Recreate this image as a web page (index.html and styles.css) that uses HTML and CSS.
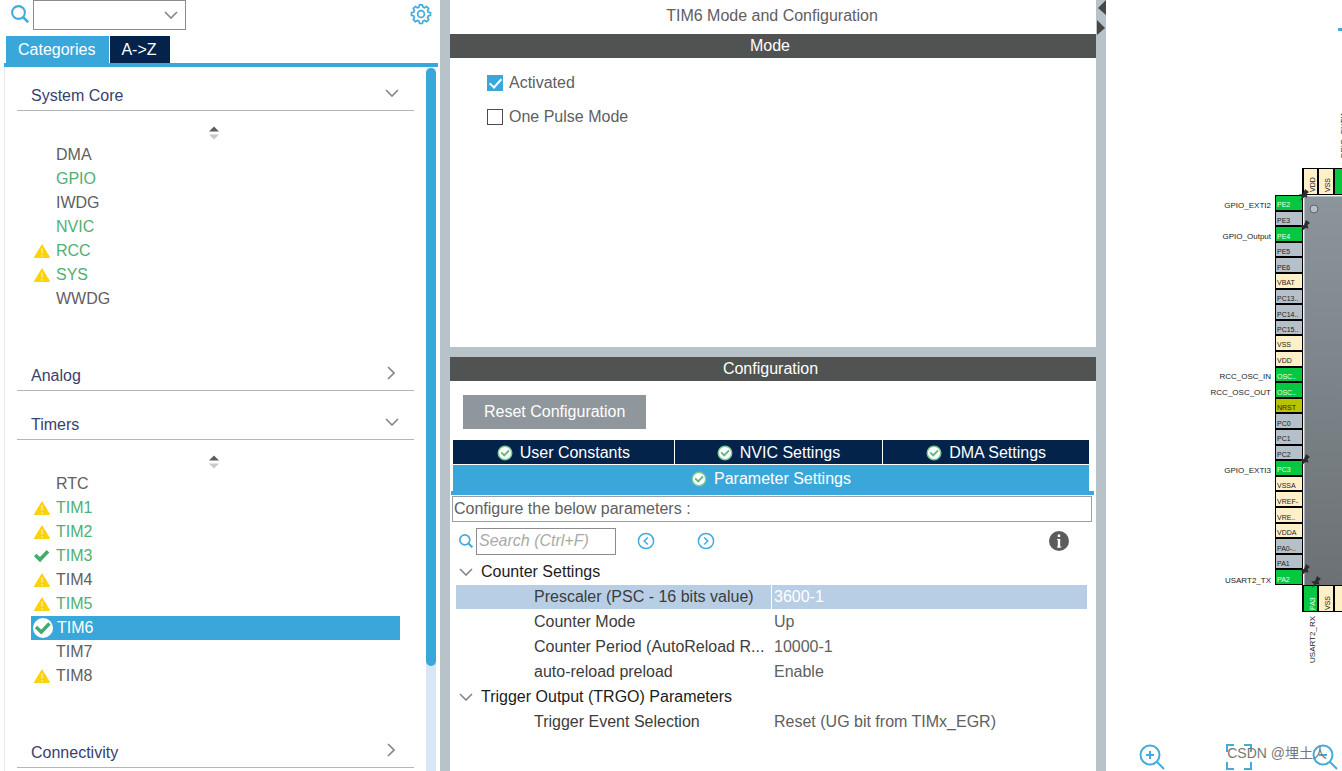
FILE: index.html
```html
<!DOCTYPE html>
<html lang="en">
<head>
<meta charset="utf-8">
<title>TIM6 Mode and Configuration</title>
<link rel="stylesheet" href="styles.css">
</head>
<body>
<svg class="defs" aria-hidden="true">
  <symbol id="warn" viewBox="0 0 16 14"><path d="M8 0.8 L15.4 13 Q15.6 13.6 15 13.6 H1 Q0.4 13.6 0.6 13 Z" fill="#fbd20c" stroke="#fbd20c" stroke-linejoin="round"/><path d="M8 4.5v5M8 11v1.4" stroke="#fff6c4" stroke-width="1.2"/></symbol>
  <symbol id="tick" viewBox="0 0 16 14"><path d="M1.2 6 L6 10.6 L14 2.2" fill="none" stroke="#43ab6c" stroke-width="3.6"/></symbol>
  <symbol id="tick-disc" viewBox="0 0 20 20"><circle cx="10" cy="10" r="10" fill="#fff"/><path d="M3 9 L8.3 14 L16.5 5.5" fill="none" stroke="#43ab6c" stroke-width="3.4"/></symbol>
  <symbol id="ok" viewBox="0 0 16 16"><circle cx="8" cy="8" r="6.8" fill="#fff" stroke="#7cc893" stroke-width="1.4"/><path d="M4.2 7.4 L7.2 10.4 L12 5.4" fill="none" stroke="#5cb87c" stroke-width="1.8"/></symbol>
  <symbol id="down" viewBox="0 0 14 8"><path d="M1 1 L7 7 L13 1" fill="none" stroke="#858585" stroke-width="1.6"/></symbol>
  <symbol id="right" viewBox="0 0 8 14"><path d="M1 1 L7 7 L1 13" fill="none" stroke="#858585" stroke-width="1.6"/></symbol>
  <symbol id="search" viewBox="0 0 18 18"><circle cx="7.5" cy="7.5" r="6.4" fill="none" stroke="#44abdd" stroke-width="2.1"/><path d="M12 12 L17.2 17.2" stroke="#44abdd" stroke-width="2.6"/></symbol>
  <symbol id="sort" viewBox="0 0 10 14"><path d="M0 5.5 L5 0.5 L10 5.5Z" fill="#5d5d5d"/><path d="M0 8.5 L5 13.5 L10 8.5Z" fill="#c9c9c9"/></symbol>
  <symbol id="pushpin" viewBox="0 0 10 12"><path d="M5 2.5 L6 0 L10 3 L7.5 5 L8.5 8.5 L5.5 8 L1 12 L3 8 L0 5.5 L4 5Z" fill="#2b2d2f"/></symbol>
</svg>
<div class="app">
  <aside class="sidebar">
    <div class="finder">
      <label for="ip-search"><svg class="i18"><use href="#search"/></svg></label>
      <div class="combo"><select id="ip-search" aria-label="Find peripheral"><option></option></select><svg class="chev"><use href="#down"/></svg></div>
      <button class="gear" aria-label="Settings"><svg viewBox="0 0 22 22"><path d="M9.6 1h2.8l.6 2.3 1.6.6 2-1.2 2.1 2-1.1 2.1.6 1.5 2.3.6v2.6l-2.3.7-.6 1.5 1.1 2.1-2.1 2-2-1.1-1.6.6-.6 2.4H9.6L9 17.3l-1.6-.6-2 1.1-2.1-2 1.1-2.1-.6-1.5-2.3-.7V8.9l2.3-.6.6-1.5-1.1-2.1 2.1-2 2 1.2L9 3.3Z" transform="translate(0 .8)" fill="none" stroke="#44abdd" stroke-width="1.7"/><circle cx="11" cy="11" r="3.4" fill="none" stroke="#44abdd" stroke-width="1.7"/></svg></button>
    </div>
    <div class="side-tabs"><button class="on">Categories</button><button>A-&gt;Z</button></div>
    <div class="side-body">
      <nav class="tree">
        <button class="cat">System Core<svg class="chev"><use href="#down"/></svg></button>
        <div class="sort"><svg><use href="#sort"/></svg></div>
        <ul>
          <li>DMA</li>
          <li class="g">GPIO</li>
          <li>IWDG</li>
          <li class="g">NVIC</li>
          <li class="g"><svg><use href="#warn"/></svg>RCC</li>
          <li class="g"><svg><use href="#warn"/></svg>SYS</li>
          <li>WWDG</li>
        </ul>
        <button class="cat">Analog<svg class="chev-r"><use href="#right"/></svg></button>
        <button class="cat">Timers<svg class="chev"><use href="#down"/></svg></button>
        <div class="sort"><svg><use href="#sort"/></svg></div>
        <ul>
          <li>RTC</li>
          <li class="g"><svg><use href="#warn"/></svg>TIM1</li>
          <li class="g"><svg><use href="#warn"/></svg>TIM2</li>
          <li class="g"><svg><use href="#tick"/></svg>TIM3</li>
          <li><svg><use href="#warn"/></svg>TIM4</li>
          <li class="g"><svg><use href="#warn"/></svg>TIM5</li>
          <li class="sel"><svg class="disc"><use href="#tick-disc"/></svg>TIM6</li>
          <li>TIM7</li>
          <li><svg><use href="#warn"/></svg>TIM8</li>
        </ul>
        <button class="cat">Connectivity<svg class="chev-r"><use href="#right"/></svg></button>
      </nav>
      <div class="scroll"><div class="thumb"></div></div>
    </div>
  </aside>
  <div class="splitter"></div>
  <main class="center">
    <h1>TIM6 Mode and Configuration</h1>
    <section class="mode">
      <h2>Mode</h2>
      <label class="check"><input type="checkbox" checked>Activated</label>
      <label class="check"><input type="checkbox">One Pulse Mode</label>
    </section>
    <section class="config">
      <h2>Configuration</h2>
      <button class="reset">Reset Configuration</button>
      <div class="tabs">
        <button><svg><use href="#ok"/></svg>User Constants</button>
        <button><svg><use href="#ok"/></svg>NVIC Settings</button>
        <button><svg><use href="#ok"/></svg>DMA Settings</button>
      </div>
      <div class="active-tab"><button><svg><use href="#ok"/></svg>Parameter Settings</button></div>
      <div class="params">
        <p>Configure the below parameters :</p>
        <div class="tools">
          <label for="q"><svg class="i14"><use href="#search"/></svg></label>
          <input id="q" type="text" placeholder="Search (Ctrl+F)">
          <button aria-label="Previous"><svg viewBox="0 0 18 18"><circle cx="9" cy="9" r="7.6"/><path d="M10.8 5.5 L7.2 9 L10.8 12.5"/></svg></button>
          <button aria-label="Next"><svg viewBox="0 0 18 18"><circle cx="9" cy="9" r="7.6"/><path d="M7.2 5.5 L10.8 9 L7.2 12.5"/></svg></button>
          <button class="info" aria-label="Information"><svg viewBox="0 0 20 20"><circle cx="10" cy="10" r="10" fill="#5c5c5c"/><path d="M10 3.5v2.6M10 8v8.5" stroke="#fff" stroke-width="2.4"/><path d="M8 8.4h2M8 16h4.4" stroke="#fff" stroke-width="1"/></svg></button>
        </div>
        <table>
          <colgroup><col class="name-col"><col></colgroup>
          <tbody>
            <tr><th colspan="2"><svg class="chev"><use href="#down"/></svg>Counter Settings</th></tr>
            <tr class="hl"><td>Prescaler (PSC - 16 bits value)</td><td>3600-1</td></tr>
            <tr><td>Counter Mode</td><td>Up</td></tr>
            <tr><td>Counter Period (AutoReload R...</td><td>10000-1</td></tr>
            <tr><td>auto-reload preload</td><td>Enable</td></tr>
            <tr><th colspan="2"><svg class="chev"><use href="#down"/></svg>Trigger Output (TRGO) Parameters</th></tr>
            <tr><td>Trigger Event Selection</td><td>Reset (UG bit from TIMx_EGR)</td></tr>
          </tbody>
        </table>
      </div>
    </section>
  </main>
  <div class="splitter"><svg viewBox="0 0 10 36"><path d="M10 0v15L2 8Z M1 20v15l8-7Z" fill="#474747"/></svg></div>
  <section class="pinout" aria-label="Pinout view">
    <svg class="chip" viewBox="0 0 236 700">
      <defs><linearGradient id="body" x1="0" y1="0" x2="0" y2="1"><stop offset="0" stop-color="#8d959c"/><stop offset="1" stop-color="#6b7174"/></linearGradient></defs>
      <rect x="232" y="28" width="4" height="3" fill="#44abdd"/>
      <rect x="198" y="196" width="38" height="389" fill="url(#body)"/>
      <path d="M198 585V196H236" fill="none" stroke="#e4e6e8"/>
      <circle cx="208" cy="209" r="4" fill="#b7c0c8" stroke="#5d6368"/>
      <path d="M169 195h28v390h-28z M196 168h40v27h-40z M196 585h40v27h-40z" fill="#000"/>
      <g class="free">
        <path d="M170 212h26v13h-26z M170 243h26v13h-26z M170 258h26v14h-26z M170 290h26v13h-26z M170 305h26v14h-26z M170 321h26v13h-26z M170 414h26v14h-26z M170 430h26v14h-26z M170 446h26v13h-26z M170 539h26v14h-26z M170 555h26v13h-26z"/>
      </g>
      <g class="power">
        <path d="M170 274h26v14h-26z M170 336h26v14h-26z M170 352h26v14h-26z M170 477h26v13h-26z M170 492h26v14h-26z M170 508h26v14h-26z M170 524h26v13h-26z M198 169h13v25h-13z M213 169h14v25h-14z M213 586h14v25h-14z M229 586h7v25h-7z"/>
      </g>
      <g class="used">
        <path d="M170 196h26v14h-26z M170 227h26v14h-26z M170 368h26v13h-26z M170 383h26v14h-26z M170 461h26v14h-26z M170 570h26v14h-26z M229 169h7v25h-7z M198 586h13v25h-13z"/>
      </g>
      <path d="M170 399h26v13h-26z" fill="#b8c400"/>
      <g class="pin">
        <text class="w" x="171" y="207">PE2</text><text x="171" y="223">PE3</text><text class="w" x="171" y="239">PE4</text>
        <text x="171" y="254">PE5</text><text x="171" y="270">PE6</text><text x="171" y="285">VBAT</text>
        <text x="171" y="301">PC13..</text><text x="171" y="317">PC14..</text><text x="171" y="332">PC15..</text>
        <text x="171" y="347">VSS</text><text x="171" y="363">VDD</text><text class="w" x="171" y="379">OSC..</text>
        <text class="w" x="171" y="395">OSC..</text><text x="171" y="410">NRST</text><text x="171" y="426">PC0</text>
        <text x="171" y="441">PC1</text><text x="171" y="457">PC2</text><text class="w" x="171" y="472">PC3</text>
        <text x="171" y="488">VSSA</text><text x="171" y="504">VREF-</text><text x="171" y="520">VRE..</text>
        <text x="171" y="535">VDDA</text><text x="171" y="551">PA0-..</text><text x="171" y="566">PA1</text>
        <text class="w" x="171" y="582">PA2</text>
        <text transform="translate(209 192) rotate(-90)">VDD</text><text transform="translate(224 192) rotate(-90)">VSS</text>
        <text class="w" transform="translate(209 610) rotate(-90)">PA3</text><text transform="translate(224 610) rotate(-90)">VSS</text>
      </g>
      <g class="signal">
        <text x="165" y="208">GPIO_EXTI2</text><text x="165" y="239">GPIO_Output</text><text x="165" y="379">RCC_OSC_IN</text>
        <text x="165" y="395">RCC_OSC_OUT</text><text x="165" y="473">GPIO_EXTI3</text><text x="165" y="583">USART2_TX</text>
        <text transform="translate(209 616) rotate(-90)">USART2_RX</text><text transform="translate(240 112) rotate(-90)">GPIO_EXTI1</text>
      </g>
      <use href="#pushpin" x="193" y="189" width="10" height="12"/><use href="#pushpin" x="194" y="220" width="10" height="12"/>
      <use href="#pushpin" x="194" y="454" width="10" height="12"/><use href="#pushpin" x="194" y="564" width="10" height="12"/>
      <use href="#pushpin" x="205" y="576" width="10" height="12"/>
    </svg>
    <div class="zoombar">
      <button aria-label="Zoom in"><svg viewBox="0 0 26 26"><circle cx="11" cy="11" r="9.5"/><path d="M18 18l7 7M7 11h8M11 7v8"/></svg></button>
      <button aria-label="Fit"><svg viewBox="0 0 26 26"><path d="M1 8V1h7M18 1h7v7M25 18v7h-7M8 25H1v-7"/></svg></button>
      <button aria-label="Zoom out"><svg viewBox="0 0 26 26"><circle cx="11" cy="11" r="9.5"/><path d="M18 18l7 7M7 11h8"/></svg></button>
    </div>
    <span class="mark">CSDN @埋土人</span>
  </section>
</div>
</body>
</html>
```

FILE: styles.css
```css
* { box-sizing: border-box; }
body { margin: 0; font: 16px/24px "Liberation Sans", "Noto Sans CJK SC", sans-serif; color: #606060; background: #fff; }
button { font: inherit; border: 0; padding: 0; margin: 0; background: none; color: inherit; }
svg { display: block; flex: none; }
h1, h2, p, ul { margin: 0; padding: 0; font-size: 16px; font-weight: 400; }
.defs { position: absolute; width: 0; height: 0; }
.app { display: flex; height: 100vh; overflow: hidden; }

.sidebar { flex: 0 0 440px; display: flex; flex-direction: column; min-height: 0; }
.finder { display: flex; height: 36px; padding-left: 11px; align-items: flex-start; }
.finder label { padding-top: 5px; width: 22px; }
.i18 { width: 18px; height: 18px; }
.i14 { width: 14px; height: 14px; }
.combo { display: grid; width: 153px; height: 30px; align-items: center; }
.combo > * { grid-area: 1 / 1; }
.combo select { appearance: none; width: 100%; height: 100%; border: 1px solid #8c8c8c; background: #fff; }
.chev { width: 14px; height: 8px; }
.chev-r { width: 8px; height: 14px; margin-right: 4px; }
.combo .chev { justify-self: end; margin-right: 8px; pointer-events: none; }
.gear { margin: 3px 8px 0 auto; }
.gear svg { width: 22px; height: 22px; }
.side-tabs { display: flex; gap: 1px; padding-left: 2px; margin: 0 2px 0 4px; border-bottom: 4px solid #3aa7db; }
.side-tabs button { height: 27px; padding: 0 13px 0 11px; background: #03234b; color: #fff; }
.side-tabs .on { padding: 0 14px 0 12px; background: #3aa7db; }
.side-body { display: flex; flex: 1; min-height: 0; margin-left: 4px; border-left: 1px solid #e6e8ea; }
.tree { flex: 1; overflow: hidden; padding: 0 12px; margin-top: -5px; }
.scroll { width: 10px; margin-right: 4px; background: #d7e7f5; border-radius: 5px 5px 0 0; }
.thumb { height: 85%; margin-top: 1px; border-radius: 5px; background: #3aa7db; }
.cat { display: flex; align-items: center; justify-content: space-between; width: 100%; height: 49px; padding: 22px 15px 2px 14px; border-bottom: 1px solid #b0b6ba; color: #39406f; text-align: left; }
.cat .chev, .cat .chev-r { margin-bottom: 6px; }
.sort { display: flex; justify-content: center; height: 32px; padding: 15px 3px 0 0; }
.sort svg { width: 10px; height: 14px; }
.tree ul { list-style: none; margin: 0 14px 31px; }
.tree li { display: flex; align-items: center; height: 24px; padding-left: 25px; }
.tree li svg { width: 16px; height: 14px; margin: 0 6px 0 -22px; }
.tree li .disc { width: 20px; height: 20px; margin: 0 4px 0 -24px; }
.tree .g { color: #4fb073; }
.tree .sel { background: #3aa7db; color: #fff; padding-left: 26px; }

.splitter { flex: 0 0 10px; background: #b7c3c9; }
.splitter svg { width: 10px; height: 36px; }

.center { flex: 0 1 646px; display: flex; flex-direction: column; min-width: 0; }
h1 { text-align: center; height: 34px; padding: 4px 2px 0 0; }
h2 { height: 24px; background: #515352; color: #fff; text-align: center; padding-right: 6px; }
.mode { height: 313px; }
.mode h2 { margin-bottom: 8px; }
.check { display: flex; align-items: center; height: 34px; padding-left: 37px; gap: 6px; }
.check input { appearance: none; width: 16px; height: 16px; margin: 0; border: 1px solid #4c4c4c; display: grid; place-items: center; }
.check input:checked { background: #3aa7db; border-color: #3aa7db; }
.check input:checked::before { content: ""; width: 5px; height: 10px; margin-bottom: 3px; border: solid #fff; border-width: 0 2px 2px 0; transform: rotate(42deg); }
.config { flex: 1; border-top: 10px solid #b7c3c9; }
.config h2 { padding-right: 5px; }
.reset { display: block; margin: 14px 0 11px 13px; padding: 0 21px; height: 34px; background: #8f979d; color: #fff; }
.tabs { display: grid; grid-template-columns: 221fr 208fr 206fr; gap: 1px; margin: 0 7px 1px 3px; }
.tabs button, .active-tab button { display: flex; align-items: center; justify-content: center; gap: 7px; height: 24px; padding-top: 1px; color: #fff; background: #03234b; }
.tabs svg, .active-tab svg { width: 16px; height: 16px; }
.active-tab { margin: 0 2px 0 1px; border-bottom: 4px solid #3aa7db; }
.active-tab button { width: calc(100% - 7px); margin-left: 2px; height: 26px; background: #3aa7db; }
.params { margin: 1px 4px 0 2px; }
.params p { height: 26px; border: 1px solid #9a9fa3; padding-left: 1px; }
.tools { display: flex; align-items: center; height: 38px; padding: 0 23px 0 7px; }
.tools label { width: 17px; }
.tools input { width: 140px; height: 27px; border: 1px solid #8c8c8c; padding: 0 2px; font: inherit; margin-right: 21px; }
.tools input::placeholder { color: #aaa; font-style: italic; opacity: 1; }
.tools button { width: 18px; margin-right: 42px; }
.tools button svg { width: 18px; height: 18px; fill: none; stroke: #44abdd; stroke-width: 1.5; }
.tools .info { width: 20px; margin: 0 0 0 auto; }
.tools .info svg { width: 20px; height: 20px; stroke: none; }
table { table-layout: fixed; width: calc(100% - 9px); margin-left: 4px; border-spacing: 0; }
.name-col { width: 315px; }
th, td { height: 25px; padding: 0; font-weight: 400; text-align: left; white-space: nowrap; overflow: hidden; border-bottom: 1px solid #fff; }
th { color: #1c1c1c; padding-left: 25px; }
th svg { float: left; margin: 8px 0 0 -22px; }
td { padding-left: 78px; color: #3c3c3c; }
td + td { padding-left: 2px; border-left: 1px solid #fff; color: #606060; }
.hl td { background: #b8cee5; }
.hl td + td { color: #fff; }

.pinout { position: relative; flex: 1 0 236px; min-width: 0; overflow: hidden; }
.chip { width: 236px; height: 700px; margin-left: auto; }
.free { fill: #b5c0c9; }
.power { fill: #fff0c8; }
.used { fill: #06c840; }
.pin text { font-size: 7px; fill: #222; }
.pin .w { fill: #e9ffe9; }
.signal text { font-size: 8px; fill: #222; text-anchor: end; }
.zoombar { position: absolute; left: 33px; right: 4px; bottom: 1px; display: flex; justify-content: space-between; }
.zoombar svg { width: 26px; height: 26px; fill: none; stroke: #44abdd; stroke-width: 2; }
.mark { position: absolute; right: 15px; bottom: 6px; font-size: 14px; color: #777; white-space: nowrap; }
```
